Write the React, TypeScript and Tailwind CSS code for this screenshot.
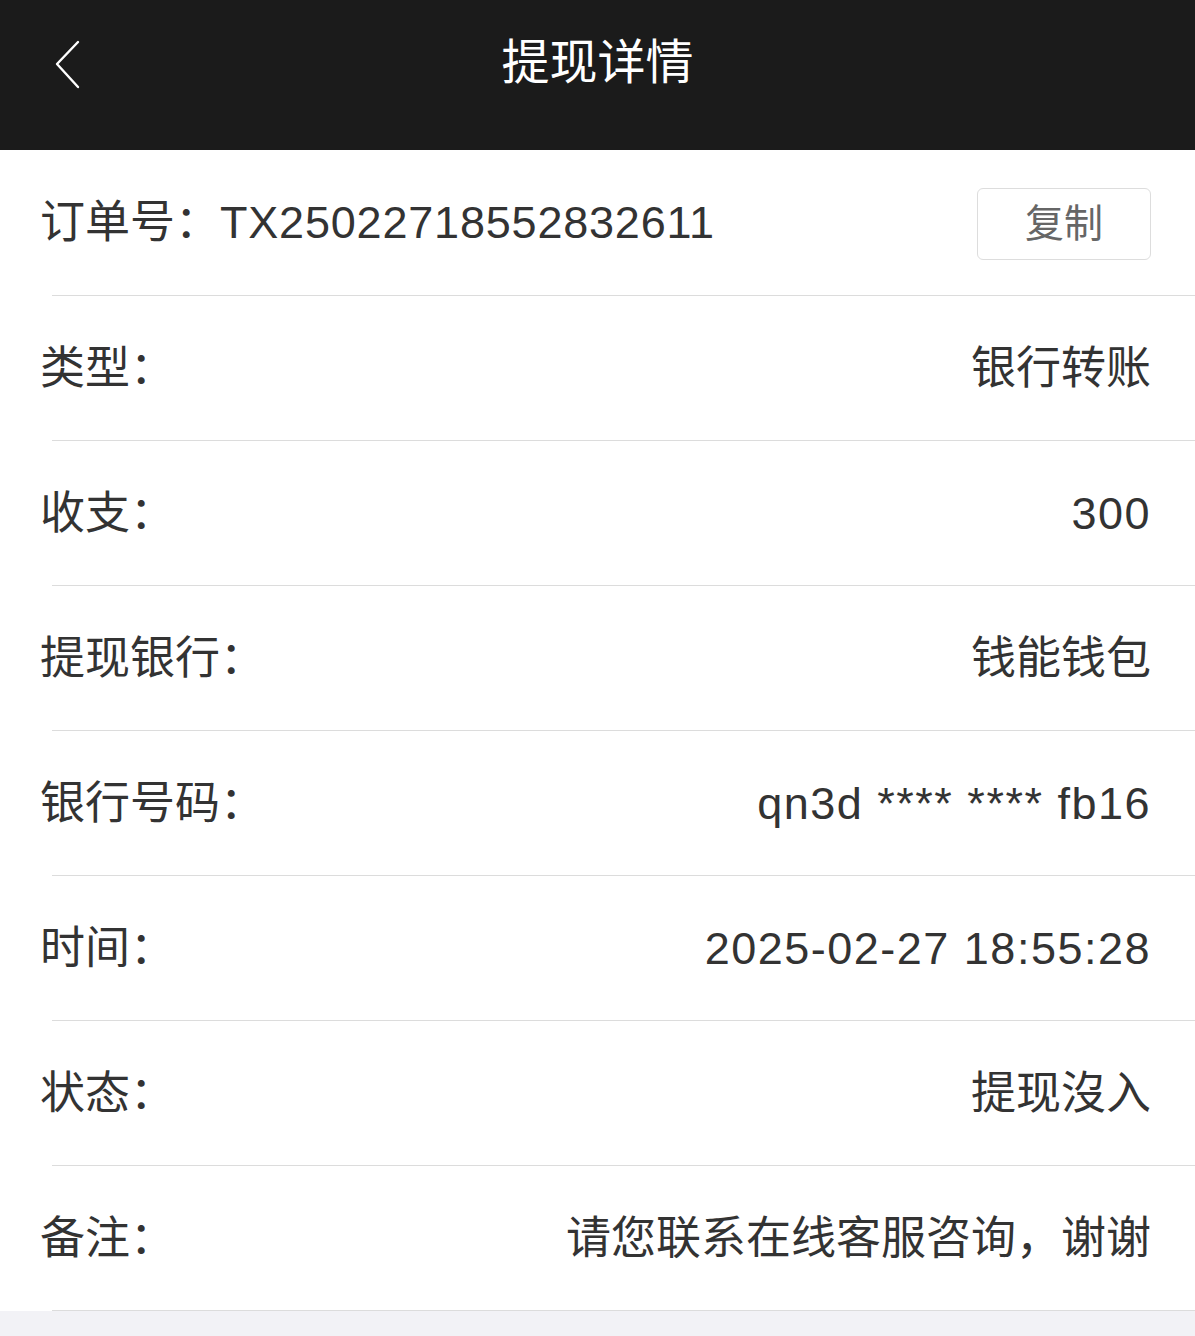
const rows = [
    { label: '类型：', value: '银行转账', latin: false },
    { label: '收支：', value: '300', latin: true },
    { label: '提现银行：', value: '钱能钱包', latin: false },
    { label: '银行号码：', value: 'qn3d **** **** fb16', latin: true },
    { label: '时间：', value: '2025-02-27 18:55:28', latin: true },
    { label: '状态：', value: '提现沒入', latin: false },
    { label: '备注：', value: '请您联系在线客服咨询，谢谢', latin: false },
]

const font = {
    fontFamily:
        '"Helvetica Neue", "Liberation Sans", "Noto Sans CJK SC", sans-serif',
}

export default function App() {
    return (
        <div className="min-h-[1336px] w-[1195px] bg-[#f2f2f6]" style={font}>
            {/* Header */}
            <header className="relative flex h-[150px] items-center justify-center bg-[#1b1b1b]">
                <button className="absolute top-[40px] left-[55px] text-white">
                    <svg width="26" height="50" viewBox="0 0 26 50" fill="none">
                        <polyline
                            points="23,2 2,24 23,47"
                            stroke="currentColor"
                            strokeWidth="2.4"
                            strokeLinecap="round"
                            strokeLinejoin="round"
                        />
                    </svg>
                </button>
                <h1 className="pb-[24px] text-[48px] font-normal text-white">
                    提现详情
                </h1>
            </header>

            {/* Detail list */}
            <div className="bg-white">
                <div className="ml-[52px] flex h-[146px] items-center justify-between border-b border-[#dcdcdc] pr-[44px]">
                    <span className="-ml-[12px] text-[45px] leading-none text-[#333]">
                        订单号：
                        <span className="tracking-[0.8px]">
                            TX25022718552832611
                        </span>
                    </span>
                    <button className="mt-[3px] flex h-[72px] w-[174px] items-center justify-center rounded-[6px] border border-[#ddd] bg-white text-[39px] text-[#666]">
                        复制
                    </button>
                </div>
                {rows.map((row) => (
                    <div
                        key={row.label}
                        className="ml-[52px] flex h-[145px] items-center justify-between border-b border-[#dcdcdc] pr-[44px]"
                    >
                        <span className="-ml-[12px] text-[45px] leading-none text-[#333]">
                            {row.label}
                        </span>
                        <span
                            className={
                                row.latin
                                    ? 'text-[45px] leading-none tracking-[1.5px] text-[#333]'
                                    : 'text-[45px] leading-none text-[#333]'
                            }
                        >
                            {row.value}
                        </span>
                    </div>
                ))}
            </div>
        </div>
    )
}
